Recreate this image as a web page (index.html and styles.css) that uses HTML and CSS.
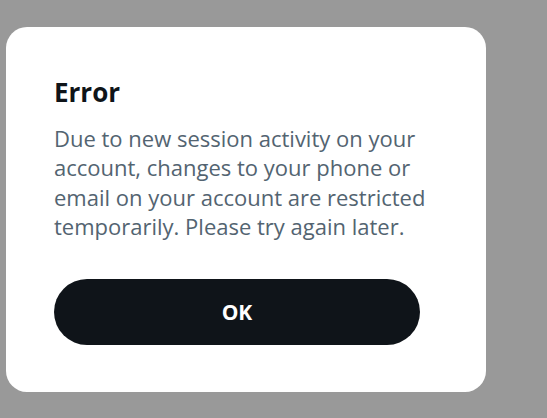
FILE: index.html
```html
<!DOCTYPE html>
<html lang="en">
<head>
<meta charset="utf-8">
<title>Error</title>
<link rel="stylesheet" href="styles.css">
</head>
<body>
  <div class="dialog" role="alertdialog" aria-labelledby="dlg-title">
    <h1 class="dialog-title" id="dlg-title">Error</h1>
    <p class="dialog-text">Due to new session activity on your account, changes to your phone or email on your account are restricted temporarily. Please try again later.</p>
    <button class="dialog-btn" type="button">OK</button>
  </div>
</body>
</html>
```
FILE: styles.css
```css
html, body {
  margin: 0;
  padding: 0;
}
body {
  background: #999999;
  width: 547px;
  height: 418px;
  overflow: hidden;
  font-family: "Open Sans", "Noto Sans", "Liberation Sans", sans-serif;
  padding: 27px 0 0 6px;
  box-sizing: border-box;
}
.dialog {
  width: 480px;
  height: 365px;
  box-sizing: border-box;
  background: #ffffff;
  border-radius: 21px;
  padding: 49px 48px 0 48px;
  display: flex;
  flex-direction: column;
}
.dialog-title {
  margin: 0;
  font-size: 26px;
  line-height: 32px;
  font-weight: 700;
  color: #0f1419;
}
.dialog-text {
  margin: 16px 0 0 0;
  font-size: 22px;
  line-height: 29.3px;
  color: #536471;
  width: 384px;
}
.dialog-btn {
  margin-top: 38px;
  width: 366px;
  height: 66px;
  border: none;
  border-radius: 33px;
  background: #0f1419;
  color: #ffffff;
  font-family: inherit;
  font-size: 21px;
  font-weight: 700;
  padding: 0;
  cursor: pointer;
}
```
